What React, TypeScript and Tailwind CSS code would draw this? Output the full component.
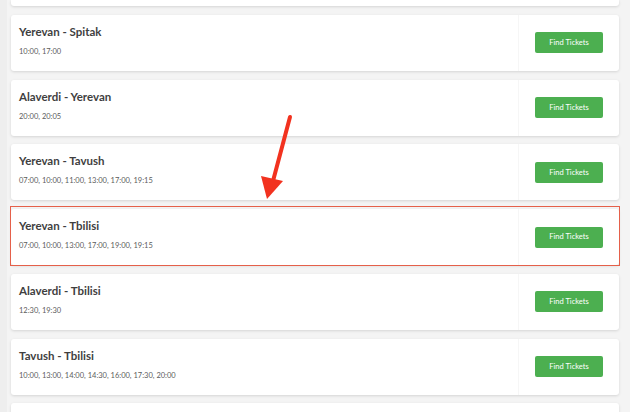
const routes = [
  { name: "Yerevan - Spitak", times: "10:00, 17:00" },
  { name: "Alaverdi - Yerevan", times: "20:00, 20:05" },
  { name: "Yerevan - Tavush", times: "07:00, 10:00, 11:00, 13:00, 17:00, 19:15" },
  { name: "Yerevan - Tbilisi", times: "07:00, 10:00, 13:00, 17:00, 19:00, 19:15", marked: true },
  { name: "Alaverdi - Tbilisi", times: "12:30, 19:30" },
  { name: "Tavush - Tbilisi", times: "10:00, 13:00, 14:00, 14:30, 16:00, 17:30, 20:00" },
];

const RouteCard = ({ name, times, marked = false }) => {
  return (
    <div className="relative">
      <div className="h-[56px] bg-white rounded-[3px] shadow-[0_1px_3px_rgba(0,0,0,0.13)] flex">
        <div className="flex-1 pl-[8px] pt-[10px]">
          <div className="text-[11.5px] leading-[14px] font-bold text-[#3f3f3f]">{name}</div>
          <div className="mt-[8px] text-[7.5px] leading-[10px] text-[#5c5c5c]">{times}</div>
        </div>
        <div className="w-[101px] border-l border-l-[#f6f6f6] flex items-center justify-center">
          <button className="w-[68px] h-[21px] rounded-[2px] bg-[#4caf50] text-white text-[7.5px] leading-none">
            Find Tickets
          </button>
        </div>
      </div>
      {marked && (
        <div className="absolute top-[-3px] bottom-[-1px] left-[-1px] right-[-1px] border border-[#e5604a] pointer-events-none" />
      )}
    </div>
  );
}

export default function App() {
  return (
    <div
      className="relative w-full h-[412px] overflow-hidden bg-[#f4f4f4] border-l-[7px] border-l-[#eeeeee]"
      style={{ fontFamily: "Lato, 'Open Sans', sans-serif" }}
    >
      <div className="flex flex-col gap-[8.75px] pl-[4px] w-[612px]">
        {/* previous card, scrolled mostly out of view */}
        <div className="h-[6px] bg-white rounded-b-[3px] shadow-[0_1px_3px_rgba(0,0,0,0.13)]" />
        {routes.map((r) => (
          <RouteCard key={r.name} {...r} />
        ))}
        <div className="h-[56px] bg-white rounded-[3px] shadow-[0_1px_3px_rgba(0,0,0,0.13)]" />
      </div>
      <svg className="absolute left-[-7px] top-0 pointer-events-none" width="630" height="412">
        <line x1="290" y1="117" x2="273" y2="181" stroke="#f2321f" strokeWidth="4" strokeLinecap="round" />
        <polygon points="261,176 283,181 267,199" fill="#f2321f" />
      </svg>
    </div>
  );
}
